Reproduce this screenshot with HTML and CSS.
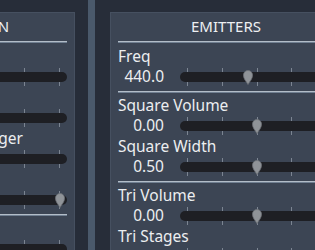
FILE: index.html
```html
<!DOCTYPE html>
<html lang="en">
<head>
    <title>Synth Panels</title>
    <link rel="stylesheet" href="styles.css">
</head>
<body>

<div class="desk">

    <section class="panel panel-left">
        <h2 class="panel-title">MODULATION</h2>
        <div class="sep sep-head"></div>

        <div class="row-label">Rate</div>
        <div class="row-value">
            <span class="num">2.00</span>
            <div class="slider">
                <div class="ticks"><i></i><i></i><i></i><i></i><i></i></div>
                <div class="track"></div>
                <div class="lane"><svg class="knob" style="left:20%" viewBox="0 0 10 15"><path d="M5 14.5 C3 11 0.5 9 0.5 5 A4.5 4.5 0 0 1 9.5 5 C9.5 9 7 11 5 14.5 Z"/></svg></div>
            </div>
        </div>

        <div class="row-label">Depth</div>
        <div class="row-value">
            <span class="num">0.10</span>
            <div class="slider">
                <div class="ticks"><i></i><i></i><i></i><i></i><i></i></div>
                <div class="track"></div>
                <div class="lane"><svg class="knob" style="left:10%" viewBox="0 0 10 15"><path d="M5 14.5 C3 11 0.5 9 0.5 5 A4.5 4.5 0 0 1 9.5 5 C9.5 9 7 11 5 14.5 Z"/></svg></div>
            </div>
        </div>

        <div class="row-label">Amplitude EG Retrigger</div>
        <div class="row-value">
            <span class="num">0.00</span>
            <div class="slider">
                <div class="ticks"><i></i><i></i><i></i><i></i><i></i></div>
                <div class="track"></div>
                <div class="lane"><svg class="knob" style="left:0%" viewBox="0 0 10 15"><path d="M5 14.5 C3 11 0.5 9 0.5 5 A4.5 4.5 0 0 1 9.5 5 C9.5 9 7 11 5 14.5 Z"/></svg></div>
            </div>
        </div>

        <div class="row-label">Sustain</div>
        <div class="row-value">
            <span class="num">1.00</span>
            <div class="slider">
                <div class="ticks"><i></i><i></i><i></i><i></i><i></i></div>
                <div class="track"></div>
                <div class="lane"><svg class="knob" style="left:100%" viewBox="0 0 10 15"><path d="M5 14.5 C3 11 0.5 9 0.5 5 A4.5 4.5 0 0 1 9.5 5 C9.5 9 7 11 5 14.5 Z"/></svg></div>
            </div>
        </div>

        <div class="sep"></div>

        <div class="row-label">Release</div>
        <div class="row-value">
            <span class="num">0.25</span>
            <div class="slider">
                <div class="ticks"><i></i><i></i><i></i><i></i><i></i></div>
                <div class="track"></div>
                <div class="lane"><svg class="knob" style="left:25%" viewBox="0 0 10 15"><path d="M5 14.5 C3 11 0.5 9 0.5 5 A4.5 4.5 0 0 1 9.5 5 C9.5 9 7 11 5 14.5 Z"/></svg></div>
            </div>
        </div>
    </section>

    <div class="gutter"><div class="rail"></div></div>

    <section class="panel">
        <h2 class="panel-title">EMITTERS</h2>
        <div class="sep sep-head"></div>

        <div class="row-label">Freq</div>
        <div class="row-value">
            <span class="num">440.0</span>
            <div class="slider">
                <div class="ticks"><i></i><i></i><i></i><i></i><i></i></div>
                <div class="track"></div>
                <div class="lane"><svg class="knob" style="left:43.6%" viewBox="0 0 10 15"><path d="M5 14.5 C3 11 0.5 9 0.5 5 A4.5 4.5 0 0 1 9.5 5 C9.5 9 7 11 5 14.5 Z"/></svg></div>
            </div>
        </div>

        <div class="sep"></div>

        <div class="row-label">Square Volume</div>
        <div class="row-value">
            <span class="num">0.00</span>
            <div class="slider">
                <div class="ticks"><i></i><i></i><i></i><i></i><i></i></div>
                <div class="track"></div>
                <div class="lane"><svg class="knob" style="left:50%" viewBox="0 0 10 15"><path d="M5 14.5 C3 11 0.5 9 0.5 5 A4.5 4.5 0 0 1 9.5 5 C9.5 9 7 11 5 14.5 Z"/></svg></div>
            </div>
        </div>

        <div class="row-label">Square Width</div>
        <div class="row-value">
            <span class="num">0.50</span>
            <div class="slider">
                <div class="ticks"><i></i><i></i><i></i><i></i><i></i></div>
                <div class="track"></div>
                <div class="lane"><svg class="knob" style="left:50%" viewBox="0 0 10 15"><path d="M5 14.5 C3 11 0.5 9 0.5 5 A4.5 4.5 0 0 1 9.5 5 C9.5 9 7 11 5 14.5 Z"/></svg></div>
            </div>
        </div>

        <div class="sep"></div>

        <div class="row-label">Tri Volume</div>
        <div class="row-value">
            <span class="num">0.00</span>
            <div class="slider">
                <div class="ticks"><i></i><i></i><i></i><i></i><i></i></div>
                <div class="track"></div>
                <div class="lane"><svg class="knob" style="left:50%" viewBox="0 0 10 15"><path d="M5 14.5 C3 11 0.5 9 0.5 5 A4.5 4.5 0 0 1 9.5 5 C9.5 9 7 11 5 14.5 Z"/></svg></div>
            </div>
        </div>

        <div class="row-label">Tri Stages</div>
        <div class="row-value">
            <span class="num">4</span>
            <div class="slider">
                <div class="ticks"><i></i><i></i><i></i><i></i><i></i></div>
                <div class="track"></div>
                <div class="lane"><svg class="knob" style="left:50%" viewBox="0 0 10 15"><path d="M5 14.5 C3 11 0.5 9 0.5 5 A4.5 4.5 0 0 1 9.5 5 C9.5 9 7 11 5 14.5 Z"/></svg></div>
            </div>
        </div>
    </section>

</div>

</body>
</html>
```

FILE: styles.css
```css
html, body {
    margin: 0;
    height: 100%;
    overflow: hidden;
}
body {
    background: #272d39;
    font-family: "Noto Sans", "Open Sans", sans-serif;
    font-size: 15.5px;
    color: #eceef0;
}
.desk {
    display: flex;
    align-items: flex-start;
}
.panel {
    flex: none;
    box-sizing: border-box;
    width: 232px;
    min-height: 270px;
    margin-top: 12px;
    padding: 0 7px;
    background: #3c4554;
    border: 1px solid #465060;
}
.panel-left {
    margin-left: -157px;
}
.gutter {
    flex: none;
    width: 35px;
    height: 260px;
}
.rail {
    width: 7px;
    height: 100%;
    margin-left: 13px;
    background: #4a596b;
}
.panel-title {
    margin: 0;
    padding: 3px 0 5px;
    font-size: 15px;
    font-weight: normal;
    line-height: 20px;
    text-align: center;
    color: #eef0f2;
}
.sep {
    height: 1px;
    margin: 4px 0 2px;
    background: #b3bdc8;
    border-bottom: 1px solid #718092;
}
.sep-head {
    margin: 0 0 3px;
}
.row-label {
    line-height: 20px;
    height: 20px;
    white-space: nowrap;
}
.row-value {
    display: grid;
    grid-template-columns: 50px 1fr;
    column-gap: 12px;
    height: 21px;
}
.num {
    line-height: 21px;
    text-align: right;
    padding-right: 4px;
}
.slider {
    position: relative;
    height: 21px;
}
.ticks {
    display: flex;
    justify-content: space-between;
    padding: 2px 7px 0;
    height: 18px;
}
.ticks i {
    width: 1px;
    background: #7b8491;
}
.track {
    position: absolute;
    top: 6px;
    left: 0;
    right: 0;
    height: 10px;
    border-radius: 5px;
    background: #1e1f24;
}
.lane {
    position: absolute;
    top: 4px;
    left: 7px;
    right: 8px;
    height: 15px;
}
.knob {
    position: absolute;
    top: 0;
    width: 10px;
    height: 15px;
    margin-left: -4.5px;
    fill: #8f9398;
    stroke: #6d7177;
    stroke-width: 0.8;
}
```
